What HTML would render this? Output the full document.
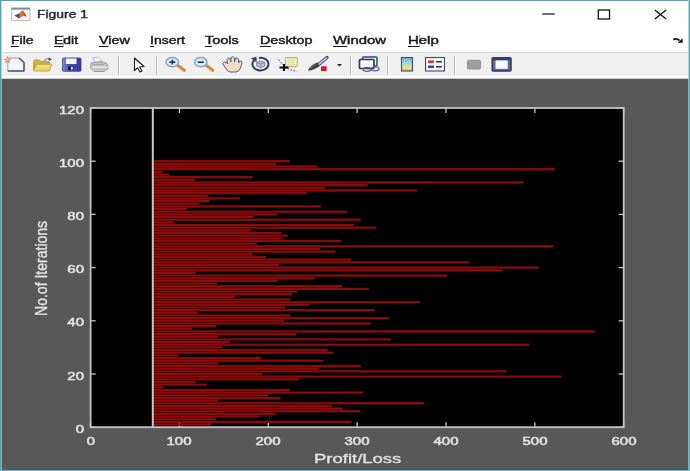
<!DOCTYPE html>
<html><head><meta charset="utf-8">
<style>
html,body{margin:0;padding:0;}
body{width:690px;height:471px;overflow:hidden;position:relative;background:#fff;font-family:"Liberation Sans",sans-serif;}
.abs{position:absolute;}
#title{left:0;top:0;width:690px;height:52px;background:#fff;}
#menusep{left:0;top:52px;width:690px;height:1px;background:#d8d8d8;}
#toolbar{left:0;top:53px;width:690px;height:26px;background:#f0f0f0;}
#tbline{left:0;top:76px;width:690px;height:2px;background:#fafafa;border-bottom:1px solid #c8c8c8;}
#fig{left:0;top:79px;width:690px;height:392px;background:#585858;}
.bl{position:absolute;background:#6ab6c2;}
.ttl{position:absolute;left:36.9px;top:8.5px;font-size:10.3px;color:#2b2b30;transform-origin:0 0;white-space:nowrap;-webkit-text-stroke:0.4px #2b2b30;}
.menu{position:absolute;top:34px;font-size:10.5px;color:#1a1a1a;transform-origin:0 0;white-space:nowrap;transform:scaleX(1.33);-webkit-text-stroke:0.4px #1a1a1a;}
.menu u{text-decoration:none;box-shadow:0 1px 0 0 #1a1a1a;}
.tl{position:absolute;color:#e4e4e4;font-size:11px;white-space:nowrap;-webkit-text-stroke:0.5px #e4e4e4;}
.xt{top:434.8px;width:60px;text-align:center;transform:scaleX(1.36);}
.yt{left:43.5px;width:40px;text-align:right;transform:scaleX(1.36);transform-origin:100% 50%;margin-top:0.7px;}
.sep{position:absolute;top:56px;width:1px;height:19px;background:#b9b9b9;border-right:1px solid #fff;}
svg{position:absolute;left:0;top:0;}
#wrap{position:absolute;left:0;top:0;width:690px;height:471px;overflow:hidden;filter:blur(0.45px);}
</style></head><body>
<div id="wrap">
<div id="title" class="abs"></div>
<div id="menusep" class="abs"></div>
<div id="toolbar" class="abs"></div>
<div id="tbline" class="abs"></div>
<div id="fig" class="abs"></div>

<!-- window border -->
<div class="bl" style="left:0;top:0;width:1px;height:471px;background:#5fa2ac"></div><div class="bl" style="left:1px;top:1px;width:1px;height:78px;background:#a8dce4"></div><div class="bl" style="left:1px;top:79px;width:1px;height:392px;background:#72b6c2"></div>
<div class="bl" style="left:0;top:0;width:690px;height:1px;background:#5fa0aa"></div>
<div class="bl" style="left:688px;top:0;width:1px;height:79px;background:#a8d8de"></div><div class="bl" style="left:688px;top:79px;width:1px;height:392px;background:#72b6c2"></div><div class="bl" style="left:689px;top:0;width:1px;height:471px;background:#5fa2ac"></div>
<div class="bl" style="left:0;top:469.5px;width:690px;height:1.5px;background:#6ab4c0"></div>

<!-- title -->
<svg width="690" height="80" viewBox="0 0 690 80">
  <!-- matlab icon -->
  <rect x="11.5" y="8" width="18.5" height="12.5" fill="#fbfbfb" stroke="#c2c2c2" stroke-width="1.1"/>
  <rect x="11.5" y="7.8" width="18.5" height="1.8" fill="#7a8ca0"/>
  <path d="M14.4 15.6 L19.5 13.2 L21 16.5 L19 18.6 Z" fill="#404c98"/>
  <path d="M19 18.6 L19.5 13.2 Q21.5 10.2 22.6 10.4 Q24.6 12.5 26.7 16.8 L23.5 15.8 Z" fill="#e8702a"/>
  <path d="M22.6 10.4 Q25 13 26.7 16.8 L24.2 15.5 Z" fill="#a04828"/>
  <!-- min max close -->
  <rect x="542.3" y="13.4" width="12.4" height="1.2" fill="#111"/>
  <rect x="598.3" y="10" width="11.2" height="9" fill="none" stroke="#111" stroke-width="1.3"/>
  <path d="M654.8 10 L666.2 19 M666.2 10 L654.8 19" stroke="#111" stroke-width="1.3"/>
  <!-- dock arrow -->
  <path d="M673.3 39.6 Q676.5 37.8 679.5 40.5" stroke="#111" stroke-width="1.8" fill="none"/>
  <path d="M677.8 42.8 L682.8 42.8 L682.6 38.3 Z" fill="#111"/>
</svg>
<div class="ttl" style="transform:scaleX(1.35)">Figure 1</div>

<div class="menu" style="left:11px"><u>F</u>ile</div>
<div class="menu" style="left:54px"><u>E</u>dit</div>
<div class="menu" style="left:99px;transform:scaleX(1.37)"><u>V</u>iew</div>
<div class="menu" style="left:150px"><u>I</u>nsert</div>
<div class="menu" style="left:205px;transform:scaleX(1.38)"><u>T</u>ools</div>
<div class="menu" style="left:260px;transform:scaleX(1.36)"><u>D</u>esktop</div>
<div class="menu" style="left:333px;transform:scaleX(1.42)"><u>W</u>indow</div>
<div class="menu" style="left:408px;transform:scaleX(1.42)"><u>H</u>elp</div>

<!-- toolbar separators -->
<div class="sep" style="left:118px"></div>
<div class="sep" style="left:156px"></div>
<div class="sep" style="left:350px"></div>
<div class="sep" style="left:387px"></div>
<div class="sep" style="left:454px"></div>

<!-- toolbar icons -->
<svg width="690" height="80" viewBox="0 0 690 80">
  <!-- new -->
  <path d="M7.8 58 L19 58 L24 62.5 L24 71 L7.8 71 Z" fill="#eef6ff" stroke="#9aa6c0" stroke-width="1"/>
  <path d="M19 58 L24 62.5 L24 71 L7.8 71" stroke="#4a5680" stroke-width="1.5" fill="none" stroke-linejoin="round"/>
  <g transform="translate(7.6 59.6) scale(1.45) translate(-7.5 -59.6)"><path d="M7.5 57 L8.3 59 L10.5 59.2 L8.6 60.3 L9.2 62.2 L7.5 61 L5.8 62.2 L6.4 60.3 L4.5 59.2 L6.7 59 Z" fill="#f08040"/></g>
  <circle cx="7.6" cy="59.6" r="1.2" fill="#ffd890"/>
  <!-- open -->
  <path d="M33.8 61.5 Q33.8 60 35.3 60 L39.5 60 L41.2 61.8 L48.5 61.8 Q49.8 61.8 49.8 63 L49.8 70.2 L33.8 70.2 Z" fill="#d8b440" stroke="#b09030" stroke-width="1"/>
  <path d="M36.5 64.3 L51.5 64.3 Q52 64.6 51.7 65.2 L49.3 70.2 Q49 71 48 71 L34.5 71 Q33.5 71 33.8 70.2 Z" fill="#f0d868" stroke="#b89a34" stroke-width="0.8"/>
  <path d="M37 66 L50 66" stroke="#fbf0b0" stroke-width="0.9"/>
  <path d="M44 61.2 Q46 57.8 49.5 58.8" stroke="#8a90a8" stroke-width="1.2" fill="none"/>
  <path d="M48.8 57.2 L51.8 59.8 L48.5 60.8 Z" fill="#2a3a96"/>
  <!-- save -->
  <defs><linearGradient id="sv" x1="0" y1="0" x2="1" y2="0"><stop offset="0" stop-color="#8a8ad8"/><stop offset="0.35" stop-color="#4a4cb8"/><stop offset="1" stop-color="#34389a"/></linearGradient></defs>
  <rect x="62.5" y="58" width="18.5" height="13.3" rx="1" fill="url(#sv)" stroke="#3a3e90" stroke-width="0.8"/>
  <rect x="66" y="58.5" width="10.5" height="5.5" fill="#f4f4ff"/>
  <rect x="68" y="66.5" width="5.5" height="3.5" fill="#222"/>
  <rect x="71" y="67" width="1.8" height="2.5" fill="#eee"/>
  <!-- print -->
  <path d="M92.5 58 L98.5 57 L102.5 62 L96 63.5 Z" fill="#eef4ff" stroke="#a8b0c0" stroke-width="0.8"/>
  <path d="M91 63 L101 61.5 L107 63.5 L108.2 68.5 L104 71.5 L94 71.5 L90.5 68 Z" fill="#c4c4c4" stroke="#8c8c8c" stroke-width="0.8"/>
  <path d="M91.5 67.2 L107.5 67.2" stroke="#efefef" stroke-width="1.3"/>
  <path d="M93 64.5 L104 64.5" stroke="#a0a0a0" stroke-width="0.8"/>
  <!-- pointer -->
  <path d="M134.5 58 L134.5 70.5 L137.5 67.8 L140 72 L142 71 L139.5 67 L144 66.5 Z" fill="#fff" stroke="#1a1a1a" stroke-width="1.1" stroke-linejoin="round"/>
  <!-- zoom in -->
  <path d="M177.8 65.5 L184.3 70.2" stroke="#d88a3a" stroke-width="3.2" stroke-linecap="round"/>
  <ellipse cx="172.3" cy="62.2" rx="6.2" ry="4.6" fill="#d8f0fa" stroke="#8aa0b8" stroke-width="1.5"/>
  <path d="M169.3 62.2 L175.3 62.2 M172.3 59.8 L172.3 64.6" stroke="#1a3a70" stroke-width="1.7"/>
  <!-- zoom out -->
  <path d="M206.3 65.5 L212.8 70.2" stroke="#d88a3a" stroke-width="3.2" stroke-linecap="round"/>
  <ellipse cx="200.8" cy="62.2" rx="6.2" ry="4.6" fill="#d8f0fa" stroke="#8aa0b8" stroke-width="1.5"/>
  <path d="M197.8 62.2 L203.8 62.2" stroke="#1a3a70" stroke-width="1.7"/>
  <!-- pan hand -->
  <path d="M222.5 63.5 Q224 61 226.5 62.5 L227.5 64 L227 59.5 Q228 57 230 58.5 L230.8 62 L231 57.5 Q233 55.8 234.3 57.8 L234.5 62 L235.5 58.5 Q237.5 57 238.5 59.2 L238.5 63 L239.5 61 Q241.8 60.5 242 62.5 L240.5 68 Q239 71.5 236 72 L230 72 Q227 71 225.5 68 Z" fill="#f8dcc0" stroke="#4a5a8a" stroke-width="1" stroke-linejoin="round"/>
  <!-- rotate -->
  <path d="M254.2 60.2 A8 6.3 0 1 0 259 57.9" fill="none" stroke="#2e3e68" stroke-width="2"/>
  <path d="M250.8 58.2 L256.5 56.8 L256.6 62.3 Z" fill="#2e3e68"/>
  <path d="M256.8 62.5 L260.5 61.2 L264.8 62.5 L264.8 66 L260.8 67.5 L256.8 66 Z" fill="#c4ccd8" stroke="#6a7690" stroke-width="0.9"/>
  <path d="M256.8 62.5 L260.8 64 L264.8 62.5 M260.8 64 L260.8 67.5" stroke="#6a7690" stroke-width="0.7" fill="none"/>
  <!-- data cursor -->
  <rect x="285.3" y="57.6" width="12" height="9" rx="1" fill="#f4f0b8" stroke="#c0b870" stroke-width="1.1"/>
  <path d="M287.5 60.5 L295 60.5 M287.5 62.5 L295 62.5 M287.5 64.5 L295 64.5" stroke="#d8d098" stroke-width="0.7"/>
  <path d="M278.5 59.5 Q282 64 285 67 Q290 70.5 297 71.2" stroke="#3a3ad0" stroke-width="1" stroke-dasharray="1.8,1.4" fill="none"/>
  <path d="M279.5 67.5 L288.5 67.5 M284 64 L284 71" stroke="#0a0a0a" stroke-width="2.1"/>
  <!-- brush -->
  <path d="M317.5 65.5 L327 57.5" stroke="#34448a" stroke-width="3.4" stroke-linecap="round"/>
  <path d="M318 65 L326.6 57.9" stroke="#d4dcf8" stroke-width="1.4" stroke-linecap="round"/>
  <path d="M317.5 62.5 Q311 64.5 307.8 70.8 Q314.5 70.5 319.2 65.8 Z" fill="#3a3a3a"/>
  <path d="M310.5 68.5 Q313 66 316 64.5" stroke="#8a8a8a" stroke-width="0.8" fill="none"/>
  <rect x="321" y="66.3" width="5.6" height="4.6" fill="#e0101a"/>
  <!-- dropdown -->
  <path d="M337 64 L342 64 L339.5 66.5 Z" fill="#222"/>
  <!-- link / print preview -->
  <rect x="362.5" y="57" width="14.5" height="9" rx="1" fill="#f0f4fc" stroke="#34466e" stroke-width="1.5"/>
  <rect x="359.5" y="59.5" width="14.5" height="9" rx="1" fill="#fafcff" stroke="#2a3a66" stroke-width="1.7"/>
  <ellipse cx="367" cy="69.3" rx="4" ry="2" fill="none" stroke="#5a6a8a" stroke-width="1.3"/>
  <ellipse cx="375" cy="68.8" rx="4" ry="2" fill="none" stroke="#5a6a8a" stroke-width="1.3"/>
  <!-- colorbar -->
  <defs><linearGradient id="cb" x1="0" y1="0" x2="0" y2="1">
    <stop offset="0" stop-color="#7aa8ec"/><stop offset="0.45" stop-color="#98e4d0"/><stop offset="0.75" stop-color="#eee070"/><stop offset="1" stop-color="#f0a8b8"/></linearGradient></defs>
  <rect x="401.5" y="57.5" width="11" height="13.5" fill="url(#cb)" stroke="#3a4a70" stroke-width="1.1"/>
  <!-- legend -->
  <rect x="425.5" y="57.5" width="19" height="13.5" fill="#f4f6fa" stroke="#3a4a70" stroke-width="1.1"/>
  <rect x="428" y="60.5" width="6" height="2.5" fill="#e03030"/>
  <rect x="428" y="65.5" width="6" height="2.5" fill="#3040c0"/>
  <rect x="436" y="61" width="6" height="1.5" fill="#333"/>
  <rect x="436" y="66" width="6" height="1.5" fill="#333"/>
  <!-- hide plot tools -->
  <rect x="467.5" y="60.3" width="13" height="8.7" rx="1.2" fill="#a0a0a0" stroke="#8a8a8a" stroke-width="0.9"/>
  <!-- show plot tools -->
  <rect x="492.2" y="57.8" width="18.8" height="13.3" rx="1" fill="#5a6a96" stroke="#2a3a66" stroke-width="1.5"/>
  <rect x="495.5" y="60.2" width="12.2" height="8.6" fill="#fafbff"/>
  <rect x="493" y="58.6" width="17.2" height="1.6" fill="#2a3a66"/>
</svg>

<!-- plot -->
<svg width="690" height="471" viewBox="0 0 690 471" style="top:0">
  <rect x="90.6" y="108.0" width="533.10" height="319.20" fill="#000"/>
  <g stroke="#c8c8c8" stroke-width="1.3">
<line x1="90.60" y1="427.2" x2="90.60" y2="422.2"/>
<line x1="90.60" y1="108.0" x2="90.60" y2="113.0"/>
<line x1="179.45" y1="427.2" x2="179.45" y2="422.2"/>
<line x1="179.45" y1="108.0" x2="179.45" y2="113.0"/>
<line x1="268.30" y1="427.2" x2="268.30" y2="422.2"/>
<line x1="268.30" y1="108.0" x2="268.30" y2="113.0"/>
<line x1="357.15" y1="427.2" x2="357.15" y2="422.2"/>
<line x1="357.15" y1="108.0" x2="357.15" y2="113.0"/>
<line x1="446.00" y1="427.2" x2="446.00" y2="422.2"/>
<line x1="446.00" y1="108.0" x2="446.00" y2="113.0"/>
<line x1="534.85" y1="427.2" x2="534.85" y2="422.2"/>
<line x1="534.85" y1="108.0" x2="534.85" y2="113.0"/>
<line x1="623.70" y1="427.2" x2="623.70" y2="422.2"/>
<line x1="623.70" y1="108.0" x2="623.70" y2="113.0"/>
<line x1="90.6" y1="427.20" x2="95.6" y2="427.20"/>
<line x1="623.7" y1="427.20" x2="618.7" y2="427.20"/>
<line x1="90.6" y1="374.00" x2="95.6" y2="374.00"/>
<line x1="623.7" y1="374.00" x2="618.7" y2="374.00"/>
<line x1="90.6" y1="320.80" x2="95.6" y2="320.80"/>
<line x1="623.7" y1="320.80" x2="618.7" y2="320.80"/>
<line x1="90.6" y1="267.60" x2="95.6" y2="267.60"/>
<line x1="623.7" y1="267.60" x2="618.7" y2="267.60"/>
<line x1="90.6" y1="214.40" x2="95.6" y2="214.40"/>
<line x1="623.7" y1="214.40" x2="618.7" y2="214.40"/>
<line x1="90.6" y1="161.20" x2="95.6" y2="161.20"/>
<line x1="623.7" y1="161.20" x2="618.7" y2="161.20"/>
<line x1="90.6" y1="108.00" x2="95.6" y2="108.00"/>
<line x1="623.7" y1="108.00" x2="618.7" y2="108.00"/>
  </g>
  <g fill="#8c0a0a">
<rect x="152.80" y="423.42" width="58.20" height="2.23"/>
<rect x="152.80" y="420.76" width="198.81" height="2.23"/>
<rect x="152.80" y="418.10" width="63.20" height="2.23"/>
<rect x="152.80" y="415.44" width="106.70" height="2.23"/>
<rect x="152.80" y="412.78" width="122.90" height="2.23"/>
<rect x="152.80" y="410.12" width="207.20" height="2.23"/>
<rect x="152.80" y="407.46" width="189.70" height="2.23"/>
<rect x="152.80" y="404.80" width="179.20" height="2.23"/>
<rect x="152.80" y="402.14" width="271.20" height="2.23"/>
<rect x="152.80" y="399.48" width="65.20" height="2.23"/>
<rect x="152.80" y="396.82" width="127.81" height="2.23"/>
<rect x="152.80" y="394.16" width="115.20" height="2.23"/>
<rect x="152.80" y="391.50" width="210.20" height="2.23"/>
<rect x="152.80" y="388.84" width="137.00" height="2.23"/>
<rect x="152.80" y="386.18" width="10.50" height="2.23"/>
<rect x="152.80" y="383.52" width="54.10" height="2.23"/>
<rect x="152.80" y="380.86" width="42.80" height="2.23"/>
<rect x="152.80" y="378.20" width="146.81" height="2.23"/>
<rect x="152.80" y="375.54" width="408.50" height="2.23"/>
<rect x="152.80" y="372.88" width="109.60" height="2.23"/>
<rect x="152.80" y="370.22" width="353.81" height="2.23"/>
<rect x="152.80" y="367.56" width="166.50" height="2.23"/>
<rect x="152.80" y="364.90" width="208.00" height="2.23"/>
<rect x="152.80" y="362.24" width="66.00" height="2.23"/>
<rect x="152.80" y="359.58" width="170.70" height="2.23"/>
<rect x="152.80" y="356.92" width="108.20" height="2.23"/>
<rect x="152.80" y="354.26" width="25.90" height="2.23"/>
<rect x="152.80" y="351.60" width="180.60" height="2.23"/>
<rect x="152.80" y="348.94" width="175.00" height="2.23"/>
<rect x="152.80" y="346.28" width="69.50" height="2.23"/>
<rect x="152.80" y="343.62" width="376.20" height="2.23"/>
<rect x="152.80" y="340.96" width="77.20" height="2.23"/>
<rect x="152.80" y="338.30" width="238.20" height="2.23"/>
<rect x="152.80" y="335.64" width="65.20" height="2.23"/>
<rect x="152.80" y="332.98" width="143.20" height="2.23"/>
<rect x="152.80" y="330.32" width="442.00" height="2.23"/>
<rect x="152.80" y="327.66" width="39.20" height="2.23"/>
<rect x="152.80" y="325.00" width="63.20" height="2.23"/>
<rect x="152.80" y="322.34" width="217.81" height="2.23"/>
<rect x="152.80" y="319.68" width="131.20" height="2.23"/>
<rect x="152.80" y="317.02" width="236.20" height="2.23"/>
<rect x="152.80" y="314.36" width="137.70" height="2.23"/>
<rect x="152.80" y="311.70" width="44.90" height="2.23"/>
<rect x="152.80" y="309.04" width="222.00" height="2.23"/>
<rect x="152.80" y="306.38" width="132.81" height="2.23"/>
<rect x="152.80" y="303.72" width="156.00" height="2.23"/>
<rect x="152.80" y="301.06" width="267.00" height="2.23"/>
<rect x="152.80" y="298.40" width="137.70" height="2.23"/>
<rect x="152.80" y="295.74" width="82.20" height="2.23"/>
<rect x="152.80" y="293.08" width="139.20" height="2.23"/>
<rect x="152.80" y="290.42" width="144.70" height="2.23"/>
<rect x="152.80" y="287.76" width="216.20" height="2.23"/>
<rect x="152.80" y="285.10" width="189.20" height="2.23"/>
<rect x="152.80" y="282.44" width="64.60" height="2.23"/>
<rect x="152.80" y="279.78" width="125.00" height="2.23"/>
<rect x="152.80" y="277.12" width="161.60" height="2.23"/>
<rect x="152.80" y="274.46" width="294.20" height="2.23"/>
<rect x="152.80" y="271.80" width="42.80" height="2.23"/>
<rect x="152.80" y="269.14" width="349.20" height="2.23"/>
<rect x="152.80" y="266.48" width="386.20" height="2.23"/>
<rect x="152.80" y="263.82" width="126.20" height="2.23"/>
<rect x="152.80" y="261.16" width="316.50" height="2.23"/>
<rect x="152.80" y="258.50" width="198.20" height="2.23"/>
<rect x="152.80" y="255.84" width="113.20" height="2.23"/>
<rect x="152.80" y="253.18" width="99.70" height="2.23"/>
<rect x="152.80" y="250.52" width="182.70" height="2.23"/>
<rect x="152.80" y="247.86" width="167.20" height="2.23"/>
<rect x="152.80" y="245.20" width="400.70" height="2.23"/>
<rect x="152.80" y="242.54" width="103.90" height="2.23"/>
<rect x="152.80" y="239.88" width="188.20" height="2.23"/>
<rect x="152.80" y="237.22" width="129.20" height="2.23"/>
<rect x="152.80" y="234.56" width="134.90" height="2.23"/>
<rect x="152.80" y="231.90" width="128.50" height="2.23"/>
<rect x="152.80" y="229.24" width="98.20" height="2.23"/>
<rect x="152.80" y="226.58" width="223.20" height="2.23"/>
<rect x="152.80" y="223.92" width="200.90" height="2.23"/>
<rect x="152.80" y="221.26" width="21.00" height="2.23"/>
<rect x="152.80" y="218.60" width="208.00" height="2.23"/>
<rect x="152.80" y="215.94" width="100.20" height="2.23"/>
<rect x="152.80" y="213.28" width="124.20" height="2.23"/>
<rect x="152.80" y="210.62" width="194.60" height="2.23"/>
<rect x="152.80" y="207.96" width="34.20" height="2.23"/>
<rect x="152.80" y="205.30" width="167.90" height="2.23"/>
<rect x="152.80" y="202.64" width="47.00" height="2.23"/>
<rect x="152.80" y="199.98" width="56.90" height="2.23"/>
<rect x="152.80" y="197.32" width="87.20" height="2.23"/>
<rect x="152.80" y="194.66" width="55.20" height="2.23"/>
<rect x="152.80" y="192.00" width="153.90" height="2.23"/>
<rect x="152.80" y="189.34" width="264.20" height="2.23"/>
<rect x="152.80" y="186.68" width="172.20" height="2.23"/>
<rect x="152.80" y="184.02" width="215.00" height="2.23"/>
<rect x="152.80" y="181.36" width="370.60" height="2.23"/>
<rect x="152.80" y="178.70" width="42.20" height="2.23"/>
<rect x="152.80" y="176.04" width="99.70" height="2.23"/>
<rect x="152.80" y="173.38" width="16.80" height="2.23"/>
<rect x="152.80" y="170.72" width="9.70" height="2.23"/>
<rect x="152.80" y="168.06" width="401.81" height="2.23"/>
<rect x="152.80" y="165.40" width="164.20" height="2.23"/>
<rect x="152.80" y="162.74" width="123.60" height="2.23"/>
<rect x="152.80" y="160.08" width="137.00" height="2.23"/>
  </g>
  <line x1="152.80" y1="108" x2="152.80" y2="427" stroke="#c8c8c8" stroke-width="2"/>
  <rect x="90.6" y="108.0" width="533.10" height="319.20" fill="none" stroke="#c4c4c4" stroke-width="1.8"/>
</svg>
<div class="tl xt" style="left:60.6px">0</div>
<div class="tl xt" style="left:149.4px">100</div>
<div class="tl xt" style="left:238.3px">200</div>
<div class="tl xt" style="left:327.1px">300</div>
<div class="tl xt" style="left:416.0px">400</div>
<div class="tl xt" style="left:504.9px">500</div>
<div class="tl xt" style="left:593.7px">600</div>
<div class="tl yt" style="top:422.2px">0</div>
<div class="tl yt" style="top:369.0px">20</div>
<div class="tl yt" style="top:315.8px">40</div>
<div class="tl yt" style="top:262.6px">60</div>
<div class="tl yt" style="top:209.4px">80</div>
<div class="tl yt" style="top:156.2px">100</div>
<div class="tl yt" style="top:103.0px">120</div>
<div class="tl" style="left:314px;top:451.3px;font-size:13.3px;transform:scaleX(1.39);-webkit-text-stroke:0.3px #e4e4e4;transform-origin:0 0;">Profit/Loss</div>
<div class="tl" style="left:32px;top:316px;font-size:17px;transform:rotate(-90deg) scaleX(0.825);-webkit-text-stroke:0.35px #e4e4e4;transform-origin:0 0;">No.of Iterations</div>
</div>
</body></html>
